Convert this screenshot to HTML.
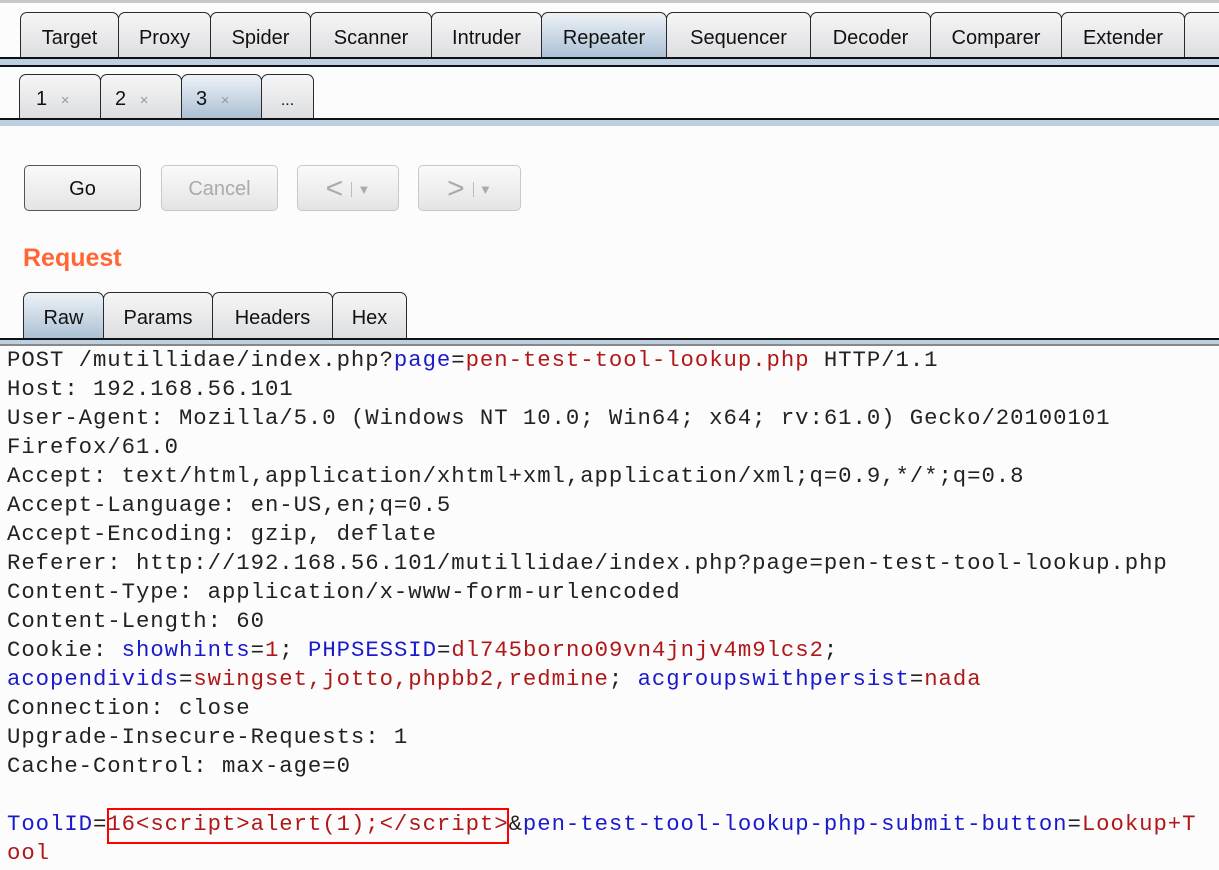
<!DOCTYPE html>
<html><head><style>
body{margin:0;width:1219px;height:870px;background:#fcfcfc;position:relative;overflow:hidden;font-family:"Liberation Sans",Arial,sans-serif;}
.abs{position:absolute}
.tab{position:absolute;box-sizing:border-box;border:1.5px solid #2a2a2a;border-bottom:none;border-radius:7px 7px 0 0;background:linear-gradient(#f6f6f6,#dcdde0);font-size:20px;color:#111;text-align:center;}
.sel{background:linear-gradient(#eef2f6,#a9bfd4);}
.band{position:absolute;left:0;width:1219px;height:6px;background:#bcd0e2;border-top:2px solid #111;}
.btn{position:absolute;box-sizing:border-box;height:46px;top:165px;border:1.5px solid #c8c8c8;border-radius:5px;background:linear-gradient(#fafafa,#e4e4e4);color:#aaa;font-size:20px;text-align:center;line-height:46px;}
pre{position:absolute;left:7px;top:346px;margin:0;font-family:"Liberation Mono","Courier New",monospace;font-size:22.3px;letter-spacing:0.95px;line-height:29px;color:#222;}
.b{color:#1a1acc}.r{color:#b01818}
</style></head><body>
<div class="abs" style="left:0;top:0;width:1219px;height:3px;background:#c8c8c8"></div>
<div class="tab" style="left:20px;top:12px;width:99px;height:46px;line-height:50px">Target</div>
<div class="tab" style="left:118px;top:12px;width:93px;height:46px;line-height:50px">Proxy</div>
<div class="tab" style="left:210px;top:12px;width:101px;height:46px;line-height:50px">Spider</div>
<div class="tab" style="left:310px;top:12px;width:122px;height:46px;line-height:50px">Scanner</div>
<div class="tab" style="left:431px;top:12px;width:111px;height:46px;line-height:50px">Intruder</div>
<div class="tab sel" style="left:541px;top:12px;width:126px;height:46px;line-height:50px">Repeater</div>
<div class="tab" style="left:666px;top:12px;width:145px;height:46px;line-height:50px">Sequencer</div>
<div class="tab" style="left:810px;top:12px;width:121px;height:46px;line-height:50px">Decoder</div>
<div class="tab" style="left:930px;top:12px;width:132px;height:46px;line-height:50px">Comparer</div>
<div class="tab" style="left:1061px;top:12px;width:124px;height:46px;line-height:50px">Extender</div>
<div class="tab" style="left:1184px;top:12px;width:60px;height:46px"></div>
<div class="band" style="top:57px"></div>
<div class="abs" style="left:0;top:65px;width:1219px;height:2px;background:#111"></div>

<div class="tab" style="left:19px;top:74px;width:82px;height:45px;line-height:48px;text-align:left;padding-left:16px">1 <span style="color:#999;font-size:15px;margin-left:8px">×</span></div>
<div class="tab" style="left:100px;top:74px;width:82px;height:45px;line-height:48px;text-align:left;padding-left:14px">2 <span style="color:#999;font-size:15px;margin-left:8px">×</span></div>
<div class="tab sel" style="left:181px;top:74px;width:81px;height:45px;line-height:48px;text-align:left;padding-left:14px">3 <span style="color:#999;font-size:15px;margin-left:8px">×</span></div>
<div class="tab" style="left:261px;top:74px;width:53px;height:45px;line-height:52px;font-size:16px">...</div>
<div class="band" style="top:118px"></div>

<div class="btn" style="left:24px;width:117px;border-color:#555;color:#111">Go</div>
<div class="btn" style="left:161px;width:117px">Cancel</div>
<div class="btn" style="left:297px;width:102px;font-size:30px">&lt; <span style="font-size:13px;border-left:1px solid #bbb;padding-left:5px;vertical-align:middle">▼</span></div>
<div class="btn" style="left:418px;width:103px;font-size:30px">&gt; <span style="font-size:13px;border-left:1px solid #bbb;padding-left:5px;vertical-align:middle">▼</span></div>

<div class="abs" style="left:23px;top:244px;font-size:25px;font-weight:bold;color:#ff6633">Request</div>

<div class="tab sel" style="left:23px;top:292px;width:81px;height:48px;line-height:50px">Raw</div>
<div class="tab" style="left:103px;top:292px;width:110px;height:48px;line-height:50px">Params</div>
<div class="tab" style="left:212px;top:292px;width:121px;height:48px;line-height:50px">Headers</div>
<div class="tab" style="left:332px;top:292px;width:75px;height:48px;line-height:50px">Hex</div>
<div class="band" style="top:338px;height:4px"></div>
<div class="abs" style="left:0;top:344px;width:1219px;height:2px;background:#888"></div>

<pre>POST /mutillidae/index.php?<span class="b">page</span>=<span class="r">pen-test-tool-lookup.php</span> HTTP/1.1
Host: 192.168.56.101
User-Agent: Mozilla/5.0 (Windows NT 10.0; Win64; x64; rv:61.0) Gecko/20100101
Firefox/61.0
Accept: text/html,application/xhtml+xml,application/xml;q=0.9,*/*;q=0.8
Accept-Language: en-US,en;q=0.5
Accept-Encoding: gzip, deflate
Referer: http://192.168.56.101/mutillidae/index.php?page=pen-test-tool-lookup.php
Content-Type: application/x-www-form-urlencoded
Content-Length: 60
Cookie: <span class="b">showhints</span>=<span class="r">1</span>; <span class="b">PHPSESSID</span>=<span class="r">dl745borno09vn4jnjv4m9lcs2</span>;
<span class="b">acopendivids</span>=<span class="r">swingset,jotto,phpbb2,redmine</span>; <span class="b">acgroupswithpersist</span>=<span class="r">nada</span>
Connection: close
Upgrade-Insecure-Requests: 1
Cache-Control: max-age=0

<span class="b">ToolID</span>=<span class="r">16&lt;script&gt;alert(1);&lt;/script&gt;</span>&amp;<span class="b">pen-test-tool-lookup-php-submit-button</span>=<span class="r">Lookup+T
ool</span></pre>
<div class="abs" style="left:107px;top:808px;width:398px;height:32px;border:2px solid #ff0000"></div>
</body></html>
